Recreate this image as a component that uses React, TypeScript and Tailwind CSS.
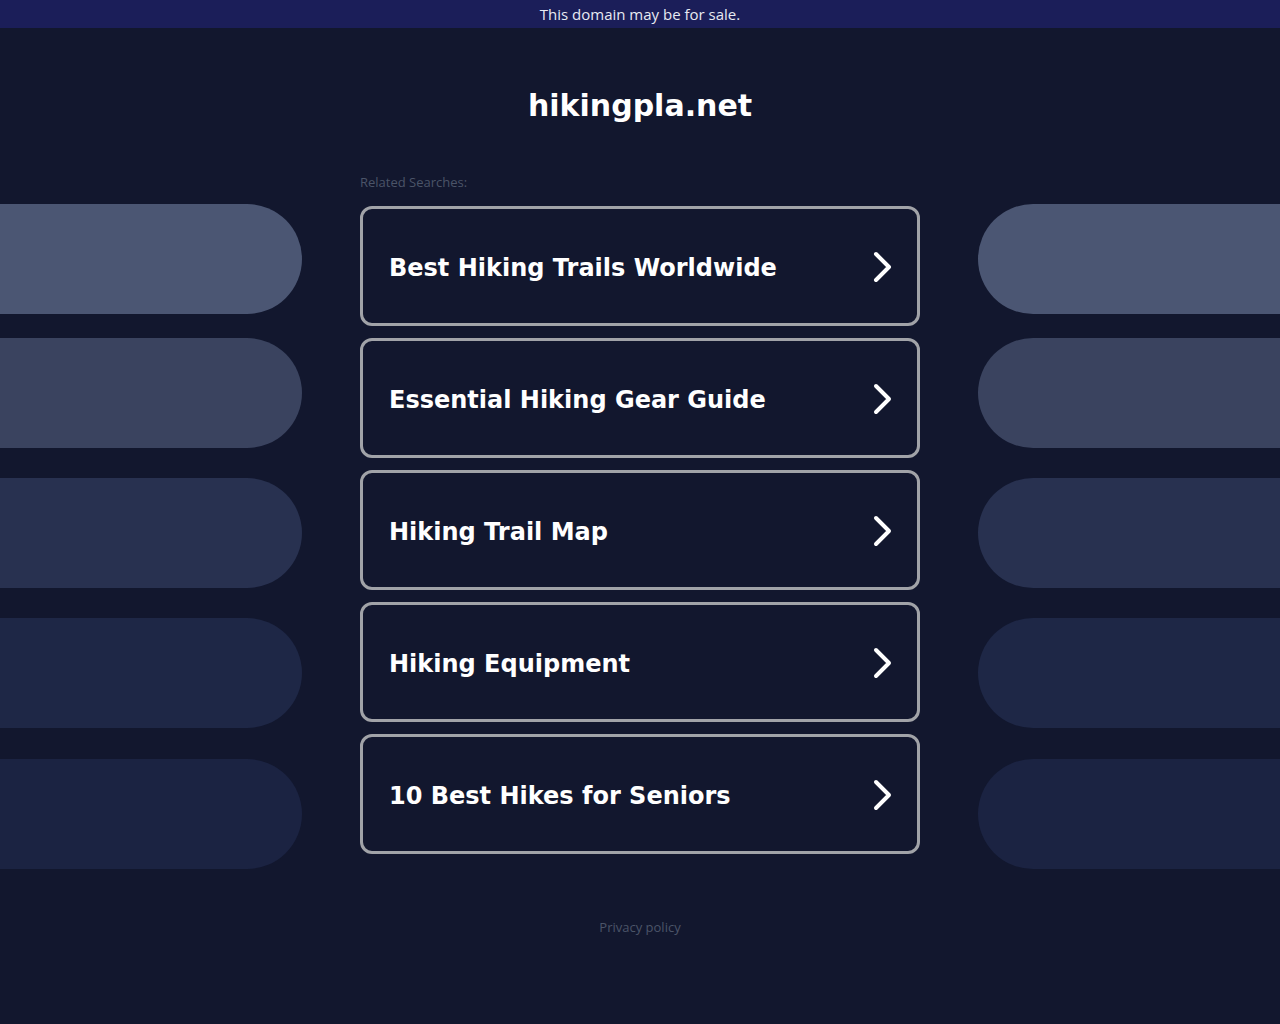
const searches = [
  'Best Hiking Trails Worldwide',
  'Essential Hiking Gear Guide',
  'Hiking Trail Map',
  'Hiking Equipment',
  '10 Best Hikes for Seniors',
];

// decorative pills on both sides, fading from light to dark
const pills = [
  { color: 'bg-[#4b5673]', gap: 'mt-0' },
  { color: 'bg-[#3a435f]', gap: 'mt-[24px]' },
  { color: 'bg-[#283150]', gap: 'mt-[30px]' },
  { color: 'bg-[#1e2746]', gap: 'mt-[30px]' },
  { color: 'bg-[#1b2342]', gap: 'mt-[31px]' },
];

export default function App() {
  return (
    <div className="min-h-[1024px] w-full bg-[#12172e] overflow-hidden" style={{ fontFamily: '"Open Sans", sans-serif' }}>
      {/* Sale banner */}
      <div className="h-[28px] bg-[#1b1e59] flex items-center justify-center text-[15px] leading-[20px] text-[#e8eaf2]">
        This domain may be for sale.
      </div>

      {/* Domain title */}
      <h1
        className="mt-[60px] text-center text-[30px] leading-[36px] font-bold text-white"
        style={{ fontFamily: '"DejaVu Sans", sans-serif' }}
      >
        hikingpla.net
      </h1>

      {/* Main row */}
      <div className="mt-[50px] flex items-start justify-center gap-[58px]">
        <div className="w-[302px] shrink-0 pt-[30px] flex flex-col">
          {pills.map((p, i) => (
            <div key={i} className={`h-[110px] w-[604px] -ml-[302px] rounded-full ${p.color} ${p.gap}`} />
          ))}
        </div>

        <div className="w-[560px] shrink-0 flex flex-col">
          <div className="h-[16px] text-[13px] leading-[16px] text-[#4b5468]">Related Searches:</div>
          <div className="mt-[16px] flex flex-col gap-[12px]">
            {searches.map((s) => (
              <a
                key={s}
                href="#"
                className="h-[120px] rounded-[12px] border-[3px] border-[#a1a3a8] flex items-center justify-between pl-[26px] pr-[22px]"
              >
                <span
                  className="mt-[4px] text-[24px] font-bold text-white"
                  style={{ fontFamily: '"DejaVu Sans", sans-serif' }}
                >
                  {s}
                </span>
                <svg className="mt-[2px]" width="24" height="34" viewBox="0 0 24 34" fill="none" stroke="white" strokeWidth="4" strokeLinecap="round" strokeLinejoin="round">
                  <polyline points="5 4 18 17 5 30" />
                </svg>
              </a>
            ))}
          </div>
        </div>

        <div className="w-[302px] shrink-0 pt-[30px] flex flex-col">
          {pills.map((p, i) => (
            <div key={i} className={`h-[110px] w-[604px] rounded-full ${p.color} ${p.gap}`} />
          ))}
        </div>
      </div>

      {/* Footer */}
      <div className="mt-[50px] text-center text-[13px] leading-[16px] text-[#4b5468]">Privacy policy</div>
    </div>
  );
}
